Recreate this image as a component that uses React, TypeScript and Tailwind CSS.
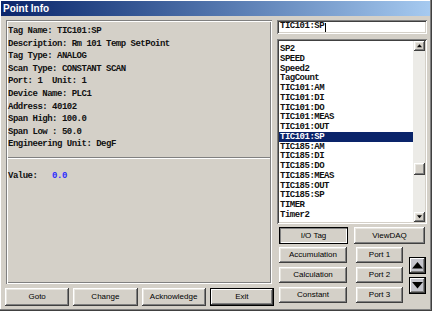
const raised =
  "shadow-[inset_-1px_-1px_0_#404040,inset_1px_1px_0_#ffffff,inset_-2px_-2px_0_#808080,inset_2px_2px_0_#e8e6e0]";
const sunken =
  "shadow-[inset_1px_1px_0_#808080,inset_-1px_-1px_0_#ffffff,inset_2px_2px_0_#404040,inset_-2px_-2px_0_#d4d0c8]";
const etched =
  "shadow-[inset_1px_1px_0_#808080,inset_2px_2px_0_#ffffff,inset_-1px_-1px_0_#ffffff,inset_-2px_-2px_0_#808080]";
const deflt =
  "shadow-[inset_0_0_0_1px_#000000,inset_-2px_-2px_0_#404040,inset_2px_2px_0_#ffffff,inset_-3px_-3px_0_#808080]";
const pushed =
  "shadow-[inset_0_0_0_1px_#000000,inset_2px_2px_0_#808080,inset_-2px_-2px_0_#ffffff]";

const mono = "font-['Liberation_Mono','Courier_New',monospace] font-bold text-[9px] tracking-[-0.5px]";
const sans = "font-['Liberation_Sans',Arial,sans-serif] text-[8px] text-black";

const info = [
  "Tag Name: TIC101:SP",
  "Description: Rm 101 Temp SetPoint",
  "Tag Type: ANALOG",
  "Scan Type: CONSTANT SCAN",
  "Port: 1  Unit: 1",
  "Device Name: PLC1",
  "Address: 40102",
  "Span High: 100.0",
  "Span Low : 50.0",
  "Engineering Unit: DegF",
];

const tags = [
  "SP2", "SPEED", "Speed2", "TagCount", "TIC101:AM", "TIC101:DI", "TIC101:DO",
  "TIC101:MEAS", "TIC101:OUT", "TIC101:SP", "TIC185:AM", "TIC185:DI", "TIC185:DO",
  "TIC185:MEAS", "TIC185:OUT", "TIC185:SP", "TIMER", "Timer2",
];

function Btn({ label, className = "", kind = raised }: { label: string; className?: string; kind?: string }) {
  return (
    <div className={`flex items-center justify-center bg-[#d4d0c8] ${kind} ${sans} ${className}`}>{label}</div>
  );
}

function Tri({ up, size = 10 }: { up?: boolean; size?: number }) {
  return (
    <svg width={size} height={size / 2 + 1} viewBox="0 0 10 6">
      <path d={up ? "M0 6 L5 0 L10 6 Z" : "M0 0 L5 6 L10 0 Z"} fill="#000" />
    </svg>
  );
}

export default function App() {
  return (
    <div className="w-[432px] h-[311px] bg-[#d4d0c8] p-px shadow-[inset_-1px_-1px_0_#404040,inset_-2px_-2px_0_#808080,inset_1px_1px_0_#ffffff] overflow-hidden">
      <div className="h-[15px] bg-gradient-to-r from-[#0a246a] to-[#a6caf0] flex items-center pl-[2px] mr-[1px]">
        <span className="font-['Liberation_Sans',Arial,sans-serif] font-bold text-[10px] text-white">Point Info</span>
      </div>

      <div className="flex mt-[4px] pl-[4px]">
        {/* left column */}
        <div className="w-[269px] flex flex-col">
          <div className={`ml-px w-[266px] h-[264px] ${etched} pt-[5px] pl-[2px] pr-[2px]`}>
            <div className={`${mono} leading-[12.6px] text-[#111]`}>
              {info.map((l) => (
                <div key={l} className="whitespace-pre">{l}</div>
              ))}
            </div>
            <div className="mt-[6px] h-[2px] border-t border-[#808080] border-b border-b-[#ffffff]" />
            <div className={`${mono} leading-[12.6px] mt-[11px] whitespace-pre text-[#111]`}>
              Value:   <span className="text-[#2a2aff]">0.0</span>
            </div>
          </div>
          <div className="grid grid-cols-4 gap-[4px] mt-[4px] h-[18px]">
            <Btn label="Goto" />
            <Btn label="Change" />
            <Btn label="Acknowledge" />
            <Btn label="Exit" kind={deflt} />
          </div>
        </div>

        {/* right column */}
        <div className="ml-[3px] w-[150px] flex flex-col">
          <div className={`h-[14px] bg-white ${sunken} flex items-center pl-[3px]`}>
            <span className={`${mono} text-[#111]`}>TIC101:SP</span>
            <span className="w-px h-[9px] bg-black ml-px" />
          </div>

          <div className={`mt-[5px] h-[185px] bg-white ${sunken} p-[2px] flex`}>
            <div className={`flex-1 pt-[3px] ${mono} leading-[11px] text-[#111]`}>
              {tags.map((t) => (
                <div
                  key={t}
                  className={`pl-px h-[9.76px] ${t === "TIC101:SP" ? "bg-[#0a246a] text-white" : ""}`}
                >
                  {t}
                </div>
              ))}
            </div>
            <div className="w-[12px] bg-[#ecebe7] flex flex-col items-center">
              <div className={`w-[11px] h-[10px] bg-[#d4d0c8] ${raised} flex items-center justify-center`}>
                <Tri up size={5} />
              </div>
              <div className={`mt-[112px] w-[11px] h-[12px] bg-[#d4d0c8] ${raised}`} />
              <div className="flex-1" />
              <div className={`w-[11px] h-[10px] bg-[#d4d0c8] ${raised} flex items-center justify-center`}>
                <Tri size={5} />
              </div>
            </div>
          </div>

          <div className="pl-[2px] mt-[3px] flex flex-col">
            <div className="flex gap-[6px] h-[17px]">
              <Btn label="I/O Tag" kind={pushed} className="w-[69px]" />
              <Btn label="ViewDAQ" className="w-[71px]" />
            </div>
            <div className="flex mt-[3px]">
              <div className="flex flex-col gap-[4px]">
                <div className="flex gap-[9px] h-[16px]">
                  <Btn label="Accumulation" className="w-[68px]" />
                  <Btn label="Port 1" className="w-[47px]" />
                </div>
                <div className="flex gap-[9px] h-[16px]">
                  <Btn label="Calculation" className="w-[68px]" />
                  <Btn label="Port 2" className="w-[47px]" />
                </div>
                <div className="flex gap-[9px] h-[16px]">
                  <Btn label="Constant" className="w-[68px]" />
                  <Btn label="Port 3" className="w-[47px]" />
                </div>
              </div>
              <div className="ml-[6px] mt-[10px] flex flex-col gap-[3px]">
                <div className={`w-[17px] h-[17px] bg-[#c4c4cc] ${deflt} flex items-center justify-center`}>
                  <Tri up size={11} />
                </div>
                <div className={`w-[17px] h-[17px] bg-[#c4c4cc] ${deflt} flex items-center justify-center`}>
                  <Tri size={11} />
                </div>
              </div>
            </div>
          </div>
        </div>
      </div>
    </div>
  );
}
